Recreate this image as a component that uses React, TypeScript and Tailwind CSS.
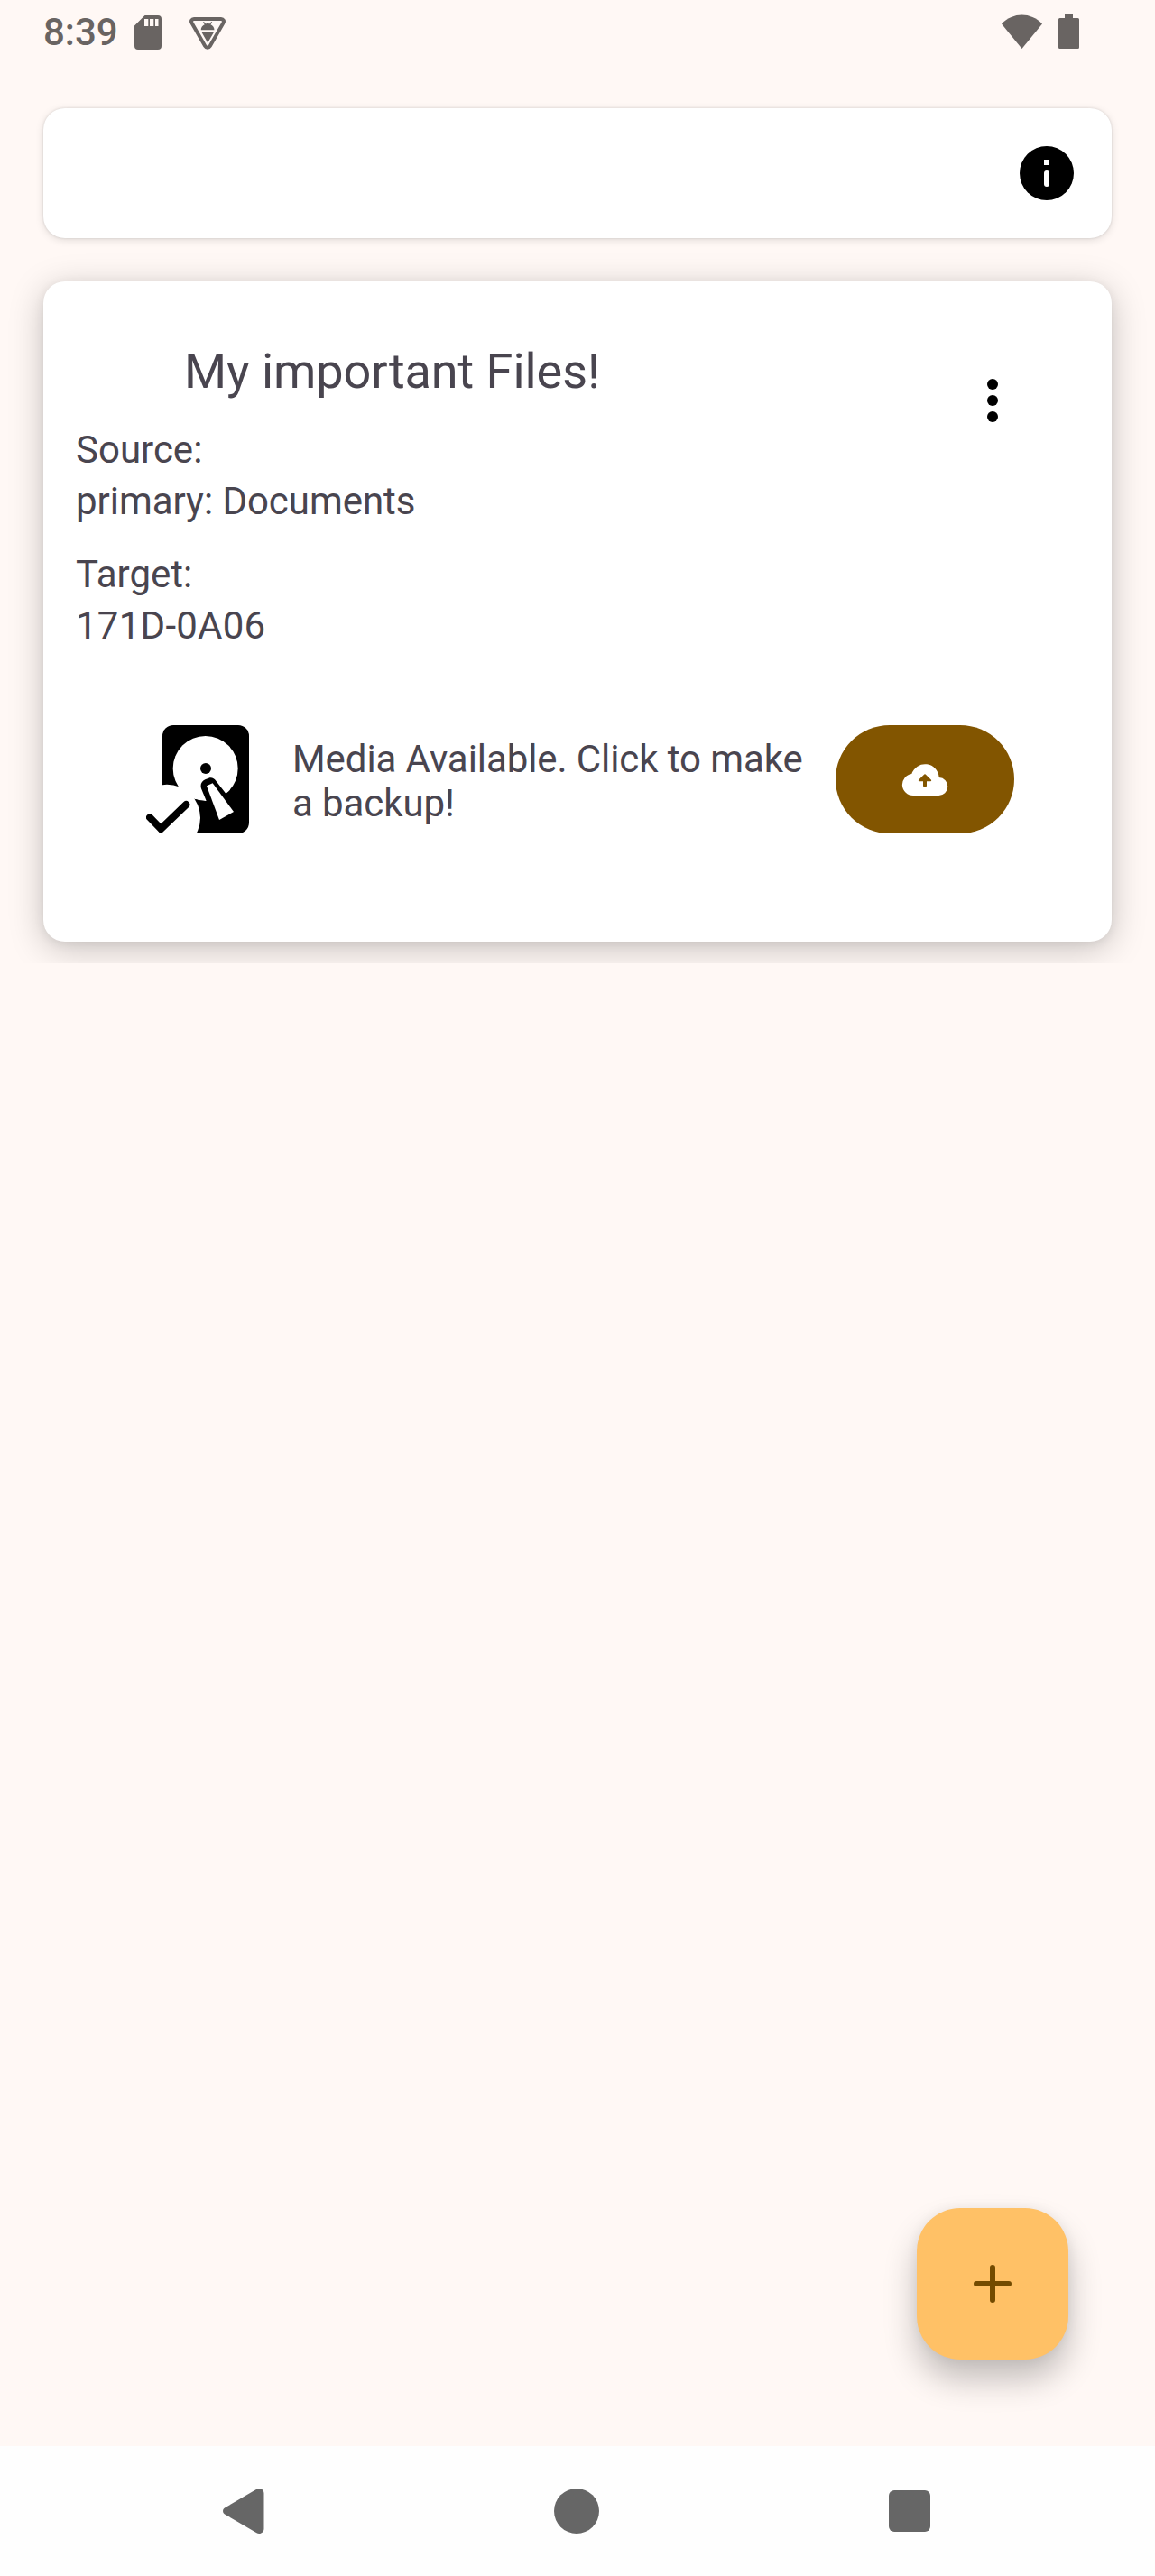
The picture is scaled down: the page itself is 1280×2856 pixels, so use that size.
import React from "react";

function StatusBar() {
  return (
    <header className="flex h-[72px] items-start pl-12 text-[#696462]">
      <span className="mt-[11px] w-[101px] text-[42px] leading-[49px] font-medium">8:39</span>
      <svg className="mt-[17px] h-[38px] w-[30px]" viewBox="0 0 30 38">
        <path
          fill="currentColor"
          fillRule="evenodd"
          d="M11.5 0H26a4 4 0 0 1 4 4v30a4 4 0 0 1-4 4H4a4 4 0 0 1-4-4V11.5zM11 4v8h4.300V4zM17 4v8h4.300V4zM23 4v8h3.500V4z"
        />
      </svg>
      <svg className="mt-[18px] ml-[31px] h-[38px] w-10" viewBox="0 0 40 38">
        <path
          d="M5 3h30c2.600 0 3.700 2.500 2.400 4.500L22.800 33c-1.300 2.200-4.300 2.200-5.600 0L2.600 7.500C1.300 5.500 2.400 3 5 3z"
          fill="none"
          stroke="currentColor"
          strokeWidth="4"
        />
        <path fill="currentColor" d="M12.700 15.200c0-3 1.800-5 4-6L15 6.500l1-.6 2 2.500c1.400-.4 2.900-.4 4.200 0l2-2.500 1 .6-1.700 2.700c2.200 1 4 3 4 6zM13.500 17.800h13.500L20.200 29.500z" />
      </svg>
      <svg className="mt-[16px] ml-auto h-[38px] w-[45px]" viewBox="0 0 45 38">
        <path fill="currentColor" d="M0 10.500C13 -2.700 32 -2.700 45 10.500L22.500 38z" />
      </svg>
      <svg className="mt-[16px] mr-[84px] ml-[18px] h-[38px] w-[23px]" viewBox="0 0 23 38">
        <path fill="currentColor" d="M7 0h9v4h5.500A1.500 1.500 0 0 1 23 5.500v31a1.500 1.500 0 0 1-1.500 1.500h-20A1.500 1.500 0 0 1 0 36.500v-31A1.500 1.500 0 0 1 1.500 4H7z" />
      </svg>
    </header>
  );
}

function InfoIcon() {
  return (
    <svg className="size-[60px]" viewBox="0 0 60 60">
      <circle cx="30" cy="30" r="30" />
      <path fill="#fff" d="M27 15h6v6h-6z" />
      <rect x="27" y="27" width="6" height="18" rx="3" fill="#fff" />
    </svg>
  );
}

function DriveIcon() {
  return (
    <svg className="h-[120px] w-[114px] text-black" viewBox="36 72 342 360">
      <rect x="90" y="72" width="288" height="360" rx="36" />
      <circle cx="233" cy="216" r="108" fill="#fff" />
      <circle cx="105" cy="380" r="111" fill="#fff" />
      <circle cx="234" cy="216" r="18" />
      <path d="M200 318Q218 325 237 324L240 340L215 360Q212 336 200 318z" />
      <path d="M236 324L219 283C215 269 220 259 232 253L244 248C254 245 262 249 268 257L302 301L327 360L279 387z" />
      <path fill="#fff" d="M237 274L257 265L327 360L279 387z" />
      <path d="M48 379L85 417L169 336" fill="none" stroke="#000" strokeWidth="24" strokeLinecap="round" />
      <path d="M77 424L85 432L93 424z" />
    </svg>
  );
}

function CloudUploadIcon() {
  return (
    <svg className="h-9 w-[50px] overflow-visible" viewBox="270 198 150 108">
      <path fill="#fff" d="M306 306A36 36 0 0 1 301 234.300A46.600 46.600 0 0 1 392 246A30 30 0 0 1 390 306z" />
      <path
        fill="#825500"
        d="M343 235.500Q345 233.500 347 235.500L366 254Q368 258 364 258.500H351V274Q350 279 345 279Q340 279 339 274V258.500H326Q322 258 324 254z"
      />
    </svg>
  );
}

function BackupCard() {
  return (
    <article className="flex h-[732px] flex-col rounded-3xl bg-white shadow-[0_8px_38px_rgba(0,0,0,0.22),0_2px_12px_rgba(0,0,0,0.07)]">
      <div className="flex">
        <div className="grow pl-9">
          <h1 className="mt-[68px] ml-[120px] text-[54px] leading-[64px] tracking-[-0.05px]">My important Files!</h1>
          <p className="mt-[30px] text-[42px] leading-[50px]">Source:</p>
          <p className="mt-[7px] text-[42px] leading-[50px] tracking-[-0.04px]">primary: Documents</p>
          <p className="mt-[31px] text-[42px] leading-[50px]">Target:</p>
          <p className="mt-[7px] text-[42px] leading-[50px] tracking-[0.25px]">171D-0A06</p>
        </div>
        <button className="mt-[108px] mr-[126px] h-12 w-3 text-black" aria-label="More options">
          <svg className="h-12 w-3" viewBox="0 0 12 48">
            <circle cx="6" cy="6" r="6" />
            <circle cx="6" cy="24" r="6" />
            <circle cx="6" cy="42" r="6" />
          </svg>
        </button>
      </div>
      <div className="mt-[85px] flex items-center pr-[108px] pl-[114px]">
        <DriveIcon />
        <p className="ml-12 w-[602px] pt-[3px] pr-6 text-[42px] leading-[49px] tracking-[-0.08px]">
          Media Available. Click to make a backup!
        </p>
        <button className="flex h-[120px] w-[198px] items-center justify-center rounded-full bg-[#825500]" aria-label="Back up">
          <CloudUploadIcon />
        </button>
      </div>
    </article>
  );
}

function NavigationBar() {
  return (
    <nav className="flex h-36 items-center bg-[#fefefe] pr-[249px] pl-[247px] text-[#666]">
      <svg className="h-[50px] w-[46px]" viewBox="0 0 46 50">
        <path fill="currentColor" d="M2 21.500L37 1C41-1.500 45.500 1 45.500 5.500V44.500C45.500 49 41 51.500 37 49L2 28.500C-.6 26.800-.6 23.200 2 21.500z" />
      </svg>
      <span className="ml-[321px] size-[50px] rounded-full bg-current" />
      <span className="ml-auto size-[46px] rounded-[6px] bg-current" />
    </nav>
  );
}

export default function App() {
  return (
    <div className="flex h-[2856px] w-[1280px] flex-col bg-[#fff8f5] font-[Roboto,sans-serif] text-[#49454f]">
      <StatusBar />
      <div className="mx-12 mt-12 flex h-36 items-center justify-end rounded-3xl bg-white pr-[42px] text-black shadow-[0_2px_10px_rgba(0,0,0,0.12),0_0_3px_rgba(0,0,0,0.12)]">
        <InfoIcon />
      </div>
      <main className="mt-2 overflow-hidden px-12 pt-10 pb-6">
        <BackupCard />
      </main>
      <button
        className="mt-auto mr-24 mb-24 flex size-[168px] items-center justify-center self-end rounded-[48px] bg-[#ffc166] shadow-[0_22px_36px_rgba(0,0,0,0.24),0_0_14px_rgba(0,0,0,0.06)]"
        aria-label="Add"
      >
        <svg className="size-[42px]" viewBox="0 0 42 42">
          <path d="M21 3v36M3 21h36" stroke="#734b00" strokeWidth="6" strokeLinecap="round" />
        </svg>
      </button>
      <NavigationBar />
    </div>
  );
}
